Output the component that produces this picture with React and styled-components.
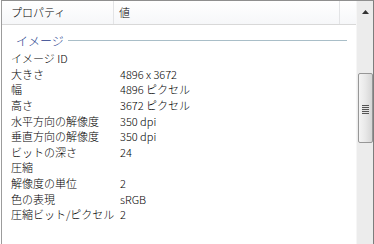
import React from 'react';
import styled, { createGlobalStyle } from 'styled-components';

const GlobalStyle = createGlobalStyle`
  html, body {
    margin: 0;
    padding: 0;
    background: #fff;
  }
  body {
    font-family: "Noto Sans CJK JP", "Liberation Sans", sans-serif;
    font-size: 11px;
    font-weight: 300;
    color: #000;
  }
`;

const Frame = styled.div`
  box-sizing: border-box;
  width: 373px;
  height: 244px;
  margin-left: 1px;
  border-top: 1px solid #8f8f8f;
  border-left: 1px solid #9c9c9c;
  border-right: 1px solid #7d7d7d;
  display: flex;
  overflow: hidden;
`;

const Pane = styled.div`
  flex: 1;
  display: flex;
  flex-direction: column;
  min-width: 0;
`;

const Header = styled.div`
  height: 23px;
  flex: none;
  display: grid;
  grid-template-columns: 112px 226px 1fr;
  background: linear-gradient(#ffffff, #f6f7f9);
  border-bottom: 1px solid #d8d8d8;
`;

const HeaderCell = styled.div`
  display: flex;
  align-items: center;
  padding-left: ${p => p.pad}px;
  border-right: ${p => (p.last ? 'none' : '1px solid #e3e4e6')};
  white-space: nowrap;
  line-height: 1;
`;

const Group = styled.div`
  display: flex;
  align-items: center;
  gap: 4px;
  height: 16px;
  margin-top: 7px;
  padding-left: 14px;
  padding-right: 9px;
  color: #1e3a8c;
  font-size: 12px;
`;

const GroupLine = styled.div`
  flex: 1;
  height: 1px;
  background: #a9bec8;
`;

const Rows = styled.div`
  display: flex;
  flex-direction: column;
  margin-top: 3px;
`;

const Row = styled.div`
  display: grid;
  grid-template-columns: 109px 1fr;
  height: 15.6px;
  align-items: center;
  padding-left: 9px;
  white-space: nowrap;
  line-height: 1;
`;

const Scrollbar = styled.div`
  width: 16px;
  flex: none;
  background: #ececec;
  border-left: 1px solid #f6f6f6;
  display: flex;
  flex-direction: column;
  align-items: center;
`;

const Arrow = styled.div`
  height: 17px;
  width: 100%;
  display: flex;
  align-items: center;
  justify-content: center;
  margin-top: 2px;
`;

const Thumb = styled.div`
  box-sizing: border-box;
  margin-top: 53px;
  width: 15px;
  height: 70px;
  border: 1px solid #979797;
  border-radius: 2px;
  background: linear-gradient(90deg, #f4f4f4, #e8e8e8 50%, #d6d6d6);
  display: flex;
  align-items: center;
  justify-content: center;
`;

const Grip = styled.div`
  width: 7px;
  height: 9px;
  background: repeating-linear-gradient(#555 0 1px, #e4e4e4 1px 2px);
  margin-top: 2px;
`;

const rows = [
  ['イメージ ID', ''],
  ['大きさ', '4896 x 3672'],
  ['幅', '4896 ピクセル'],
  ['高さ', '3672 ピクセル'],
  ['水平方向の解像度', '350 dpi'],
  ['垂直方向の解像度', '350 dpi'],
  ['ビットの深さ', '24'],
  ['圧縮', ''],
  ['解像度の単位', '2'],
  ['色の表現', 'sRGB'],
  ['圧縮ビット/ピクセル', '2'],
];

export default function App() {
  return (
    <>
      <GlobalStyle />
      <Frame>
        <Pane>
          <Header>
            <HeaderCell pad={9}>プロパティ</HeaderCell>
            <HeaderCell pad={5}>値</HeaderCell>
            <HeaderCell last />
          </Header>
          <Group>
            <span>イメージ</span>
            <GroupLine />
          </Group>
          <Rows>
            {rows.map(([k, v]) => (
              <Row key={k}>
                <span>{k}</span>
                <span>{v}</span>
              </Row>
            ))}
          </Rows>
        </Pane>
        <Scrollbar>
          <Arrow>
            <svg width="7" height="4" viewBox="0 0 7 4">
              <polygon points="3.5,0 7,4 0,4" fill="#333" />
            </svg>
          </Arrow>
          <Thumb>
            <Grip />
          </Thumb>
        </Scrollbar>
      </Frame>
    </>
  );
}
